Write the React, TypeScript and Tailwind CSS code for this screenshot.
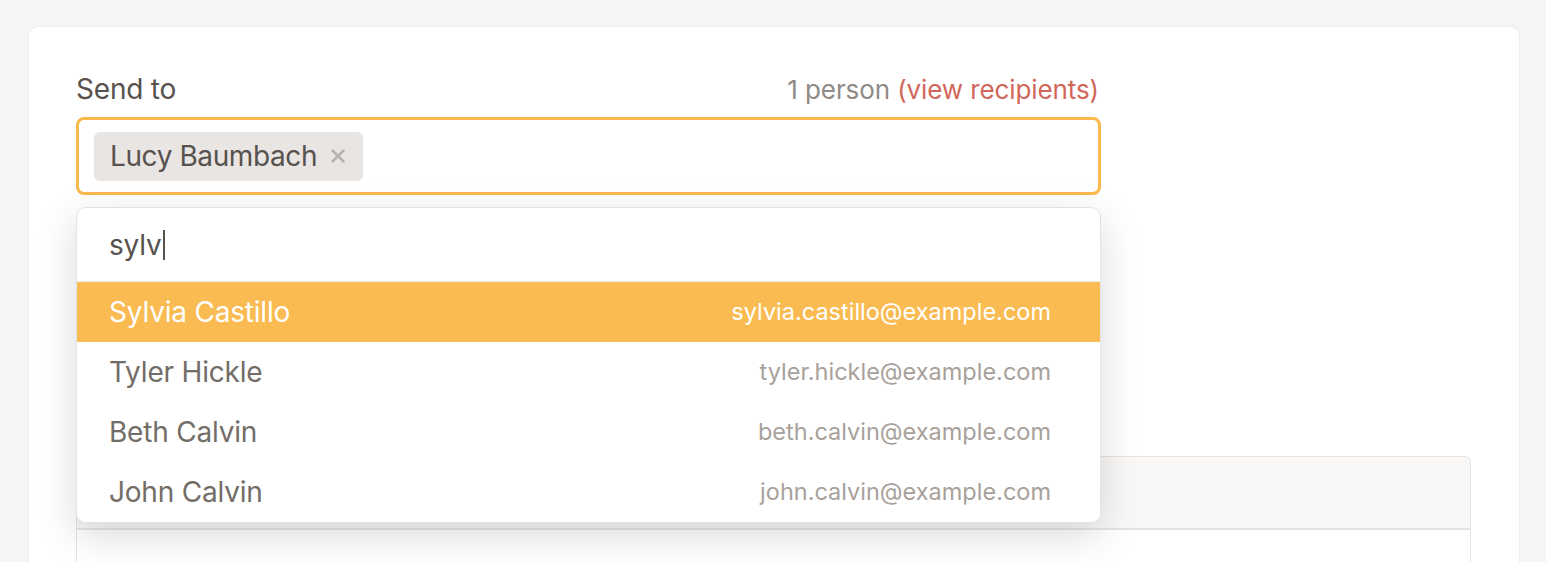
import { X } from "lucide-react";

const people = [
  { name: "Sylvia Castillo", email: "sylvia.castillo@example.com" },
  { name: "Tyler Hickle", email: "tyler.hickle@example.com" },
  { name: "Beth Calvin", email: "beth.calvin@example.com" },
  { name: "John Calvin", email: "john.calvin@example.com" },
];

export default function App() {
  return (
    <div className="h-[562px] overflow-hidden bg-[#f6f5f3] pt-[26px] pl-[28px] pr-[26px] font-['Inter',sans-serif]">
      <div className="h-[600px] rounded-[10px] bg-white border border-[#efedeb] pl-[47px] pr-[48px] pt-[46px]">
        <div className="relative w-[1025px]">
          <div className="flex items-center justify-between h-[32px] mb-[12px]">
            <span className="text-[28px] text-[#57524e] tracking-[-0.2px]">Send to</span>
            <span className="text-[26px] text-[#8f8a85] pr-[2px] tracking-[-0.1px]">
              1 person <span className="text-[#d0675a]">(view recipients)</span>
            </span>
          </div>
          <div className="h-[78px] rounded-[8px] border-[3px] border-[#fbb84d] flex items-center px-[15px]">
            <div className="h-[49px] rounded-[6px] bg-[#e9e5e3] flex items-center pl-[16px] pr-[14px] gap-[10px]">
              <span className="text-[28px] text-[#57524e] tracking-[-0.4px]">Lucy Baumbach</span>
              <X size={22} strokeWidth={2.75} className="text-[#b8b2ad]" />
            </div>
          </div>

          <div className="absolute left-0 top-[134px] z-10 w-[1025px] rounded-[10px] bg-white border border-[#e6e4e2] shadow-[0_12px_40px_rgba(0,0,0,0.15)] overflow-hidden">
            <div className="h-[74px] flex items-center pl-[32px] border-b border-[#efedeb]">
              <span className="text-[28px] text-[#57524e] tracking-[-0.2px]">sylv</span>
              <span className="w-[2px] h-[30px] bg-[#57524e] ml-[1px]" />
            </div>
            {people.map((p, i) => (
              <div
                key={p.email}
                className={`h-[60px] flex items-center justify-between pl-[32px] pr-[49px] ${
                  i === 0 ? "bg-[#f9bb52]" : "bg-white"
                }`}
              >
                <span className={`text-[28px] tracking-[-0.2px] ${i === 0 ? "text-white" : "text-[#736d67]"}`}>
                  {p.name}
                </span>
                <span className={`text-[23.5px] ${i === 0 ? "text-white" : "text-[#a8a19b]"}`}>{p.email}</span>
              </div>
            ))}
          </div>
        </div>

        <div className="mt-[261px] w-[1395px] rounded-t-[6px] border border-[#e6e3e1] border-b-0">
          <div className="h-[73px] bg-[#f9f8f6] border-b-2 border-[#e6e3e1] rounded-t-[6px]" />
          <div className="h-[200px] bg-white" />
        </div>
      </div>
    </div>
  );
}
